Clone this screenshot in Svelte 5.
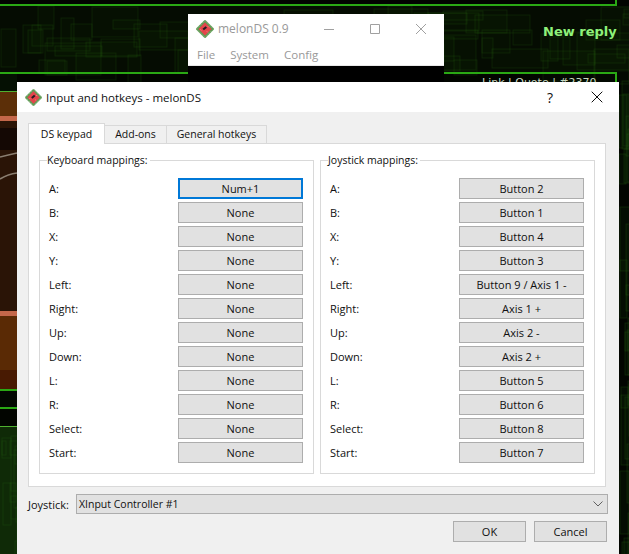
<script>
  const keys = ['A:', 'B:', 'X:', 'Y:', 'Left:', 'Right:', 'Up:', 'Down:', 'L:', 'R:', 'Select:', 'Start:'];
  const keyboard = ['Num+1', 'None', 'None', 'None', 'None', 'None', 'None', 'None', 'None', 'None', 'None', 'None'];
  const joystick = ['Button 2', 'Button 1', 'Button 4', 'Button 3', 'Button 9 / Axis 1 -', 'Axis 1 +', 'Axis 2 -', 'Axis 2 +', 'Button 5', 'Button 6', 'Button 8', 'Button 7'];
  const groups = [
    { title: 'Keyboard mappings:', values: keyboard },
    { title: 'Joystick mappings:', values: joystick }
  ];
  const tabs = ['DS keypad', 'Add-ons', 'General hotkeys'];

  // Deterministic scatter of thin outlined boxes for the site's circuit-like wallpaper.
  let seed = 7;
  const rnd = (n) => {
    seed = (seed * 1103515245 + 12345) % 2147483648;
    return (seed / 2147483648) * n;
  };
  const topSquares = Array.from({ length: 70 }, () => [
    Math.round(rnd(629)), Math.round(6 + rnd(55)), Math.round(10 + rnd(50)), Math.round(8 + rnd(30))
  ]);
  const sideSquares = Array.from({ length: 26 }, () => [
    Math.round(619 + rnd(10)), Math.round(75 + rnd(470)), Math.round(4 + rnd(10)), Math.round(12 + rnd(60))
  ]);
  const leftSquares = Array.from({ length: 12 }, () => [
    Math.round(rnd(17)), Math.round(428 + rnd(120)), Math.round(4 + rnd(12)), Math.round(12 + rnd(50))
  ]);
</script>

{#snippet melon(size)}
  <svg class="melon" width={size} height={size} viewBox="0 0 18 18">
    <path d="M9 1 17 9 9 17 1 9z" fill="#e4454b" stroke="#5f9a55" stroke-width="2" stroke-linejoin="round" />
    <path d="M9 .4 17.600 9 9 17.600.4 9z" fill="none" stroke="#b9d6a8" stroke-width=".6" stroke-dasharray="1.500 1.500" />
    <path d="M6.500 8.800 9.600 6.200 11 7.800 7.900 10.300z" fill="#231c20" />
    <path d="M4.500 9.500l.8.800M12 6.500l.8.800M11 11.500l.8.800" stroke="#f7a9a4" stroke-width=".9" />
  </svg>
{/snippet}

<div class="desktop">
  <svg class="backdrop" width="629" height="554" viewBox="0 0 629 554">
    <rect width="629" height="554" fill="#020500" />
    <rect y="6" width="629" height="66" fill="#050c02" />
    {#each topSquares as [x, y, w, h]}
      <rect {x} {y} width={w} height={h} fill="#2a6a12" fill-opacity=".05" stroke="#2e7a16" stroke-opacity=".18" />
    {/each}
    {#each sideSquares as [x, y, w, h]}
      <rect {x} {y} width={w} height={h} fill="#1c4a0e" fill-opacity=".12" stroke="#2e7a16" stroke-opacity=".22" />
    {/each}
    <rect y="0" width="615" height="4" fill="#010300" />
    <rect y="4" width="616" height="2" fill="#2aa814" />
    <rect x="615" y="0" width="2" height="6" fill="#2aa814" />
    <rect y="72" width="617" height="2" fill="#2aa814" />
    <rect x="615" y="72" width="2" height="10" fill="#2aa814" />
    <rect y="74" width="17" height="17" fill="#051003" />
    <rect y="91" width="17" height="1" fill="#4fb030" />
    <rect y="92" width="17" height="24" fill="#5c2f08" />
    <rect y="116" width="17" height="5" fill="#c4674a" />
    <rect y="121" width="17" height="190" fill="#2a1406" />
    <rect y="128" width="17" height="22" fill="#140804" />
    <path d="M0 157Q8 155 17 153M0 179Q8 174 17 173" stroke="#8a7e70" stroke-width="1.500" fill="none" />
    <rect y="311" width="17" height="5" fill="#c4674a" />
    <rect y="316" width="17" height="73" fill="#5a2a05" />
    <rect y="370" width="17" height="19" fill="#481a02" />
    <rect y="389" width="17" height="2" fill="#2aa814" />
    <rect y="391" width="17" height="16" fill="#030802" />
    <rect y="407" width="17" height="2" fill="#2aa814" />
    <rect y="409" width="17" height="17" fill="#020500" />
    <rect y="426" width="17" height="1" fill="#4fb030" />
    <rect y="427" width="17" height="127" fill="#0f2a07" />
    {#each leftSquares as [x, y, w, h]}
      <rect {x} {y} width={w} height={h} fill="none" stroke="#2e7a16" stroke-opacity=".18" />
    {/each}
  </svg>

  <div class="reply">New reply</div>
  <div class="links">Link | Quote | #2370</div>

  <section class="main-window">
    <header class="main-title">
      {@render melon(18)}
      <span class="main-name">melonDS 0.9</span>
      <div class="caption-buttons">
        <svg width="12" height="12" viewBox="0 0 12 12"><path d="M1 6.500h10" stroke="#a0a0a0" /></svg>
        <svg width="12" height="12" viewBox="0 0 12 12"><path d="M1.500 1.500h9v9h-9z" stroke="#a0a0a0" fill="none" /></svg>
        <svg width="12" height="12" viewBox="0 0 12 12"><path d="M1 1l10 10M11 1 1 11" stroke="#a0a0a0" /></svg>
      </div>
    </header>
    <nav class="menu">
      <span>File</span><span>System</span><span>Config</span>
    </nav>
    <div class="screen"></div>
  </section>

  <section class="dialog">
    <header class="dialog-title">
      {@render melon(17)}
      <span class="dialog-name">Input and hotkeys - melonDS</span>
      <span class="help">?</span>
      <svg class="close" width="12" height="12" viewBox="0 0 12 12"><path d="M.7.7l10.600 10.600M11.300.7.7 11.300" stroke="#101010" /></svg>
    </header>
    <div class="body">
      <div class="tabs">
        {#each tabs as tab, i}
          <div class="tab" class:active={i === 0}>{tab}</div>
        {/each}
      </div>
      <div class="pane">
        {#each groups as group, g}
          <fieldset class="group">
            <legend>{group.title}</legend>
            {#each keys as key, i}
              <div class="row">
                <span>{key}</span>
                <div class="btn map" class:focus={g === 0 && i === 0}>{group.values[i]}</div>
              </div>
            {/each}
          </fieldset>
        {/each}
      </div>
      <div class="joystick">
        <span>Joystick:</span>
        <div class="combo">
          <span>XInput Controller #1</span>
          <svg width="10" height="6" viewBox="0 0 10 6"><path d="M.5.5 5 5 9.500.5" stroke="#606060" fill="none" /></svg>
        </div>
      </div>
      <div class="actions">
        <div class="btn action">OK</div>
        <div class="btn action">Cancel</div>
      </div>
    </div>
  </section>
</div>

<style>
  :global(body) {
    margin: 0;
    overflow: hidden;
  }
  .desktop {
    position: relative;
    width: 629px;
    height: 554px;
    overflow: hidden;
    font-family: "Open Sans", "Noto Sans", sans-serif;
    font-size: 11px;
    color: #101010;
  }
  .backdrop {
    position: absolute;
    inset: 0;
    display: block;
  }
  .reply {
    position: absolute;
    left: 543px;
    top: 24px;
    font-family: "DejaVu Sans", sans-serif;
    font-size: 13px;
    font-weight: 700;
    color: #8ff27a;
  }
  .links {
    position: absolute;
    left: 482px;
    top: 76px;
    height: 6px;
    overflow: hidden;
    font-family: "DejaVu Sans", sans-serif;
    font-size: 11px;
    line-height: 14px;
    color: #c8d8c0;
    white-space: nowrap;
  }
  .main-window {
    position: absolute;
    left: 188px;
    top: 14px;
    width: 256px;
    height: 68px;
    background: #fff;
    display: flex;
    flex-direction: column;
  }
  .main-title {
    height: 29px;
    display: flex;
    align-items: center;
    padding-left: 8px;
    gap: 4px;
    color: #999;
    font-size: 12px;
  }
  .main-name {
    flex: 1;
  }
  .caption-buttons {
    display: flex;
    gap: 34px;
    padding-right: 17px;
    align-items: center;
  }
  .caption-buttons svg {
    display: block;
  }
  .menu {
    height: 22px;
    display: flex;
    gap: 15px;
    padding-left: 9px;
    align-items: center;
    color: #999;
    font-size: 11.500px;
  }
  .screen {
    flex: 1;
    background: #000;
    border-top: 1px solid #e8e8e8;
  }
  .melon {
    display: block;
    flex: none;
  }
  .dialog {
    position: absolute;
    left: 17px;
    top: 82px;
    width: 602px;
    height: 472px;
    background: #f0f0f0;
    display: flex;
    flex-direction: column;
  }
  .dialog-title {
    height: 30px;
    background: #fff;
    display: flex;
    align-items: center;
    padding-left: 8px;
    gap: 4px;
    font-size: 11.500px;
  }
  .dialog-name {
    flex: 1;
  }
  .help {
    width: 12px;
    font-size: 14px;
    margin-right: 28px;
  }
  .close {
    margin-right: 16px;
    display: block;
  }
  .body {
    flex: 1;
    padding: 13px 11px 0;
    display: flex;
    flex-direction: column;
  }
  .tabs {
    display: flex;
    height: 18px;
    position: relative;
    z-index: 1;
    align-items: flex-end;
  }
  .tab {
    height: 18px;
    line-height: 17px;
    border: 1px solid #d9d9d9;
    border-bottom: none;
    border-left-width: 0;
    background: #f0f0f0;
    box-sizing: border-box;
    font-size: 10.500px;
    text-align: center;
  }
  .tab:nth-child(1) {
    width: 77px;
  }
  .tab:nth-child(2) {
    width: 62px;
  }
  .tab:nth-child(3) {
    width: 100px;
  }
  .tab.active {
    height: 21px;
    line-height: 20px;
    background: #fff;
    border-left-width: 1px;
    margin-bottom: -1px;
  }
  .pane {
    width: 578px;
    height: 344px;
    box-sizing: border-box;
    background: #fff;
    border: 1px solid #d9d9d9;
    padding: 8px 10px 0;
    display: flex;
    gap: 6px;
    align-items: flex-start;
  }
  .group {
    width: 275px;
    height: 322px;
    box-sizing: border-box;
    margin: 0;
    border: 1px solid #d9d9d9;
    padding: 10px 10px 0 9px;
    min-width: 0;
    display: flex;
    flex-direction: column;
    gap: 3px;
  }
  legend {
    padding: 0 2px 0 0;
    margin-left: -2px;
    font-size: 10.500px;
    line-height: 16px;
  }
  .row {
    height: 21px;
    display: flex;
    justify-content: space-between;
    align-items: center;
  }
  .btn {
    box-sizing: border-box;
    border: 1px solid #adadad;
    background: #e1e1e1;
    text-align: center;
    height: 21px;
    line-height: 19px;
    font-size: 11px;
  }
  .map {
    width: 125px;
  }
  .focus {
    border: 2px solid #0078d7;
    line-height: 17px;
  }
  .joystick {
    display: flex;
    align-items: center;
    gap: 7px;
    margin-top: 7px;
    height: 20px;
  }
  .combo {
    width: 532px;
    height: 20px;
    box-sizing: border-box;
    border: 1px solid #adadad;
    background: #e1e1e1;
    display: flex;
    align-items: center;
    justify-content: space-between;
    padding: 0 4px 0 2px;
    font-size: 10.500px;
  }
  .combo svg {
    display: block;
  }
  .actions {
    display: flex;
    justify-content: flex-end;
    gap: 8px;
    margin-top: 7px;
    width: 579px;
  }
  .action {
    width: 73px;
  }
</style>
